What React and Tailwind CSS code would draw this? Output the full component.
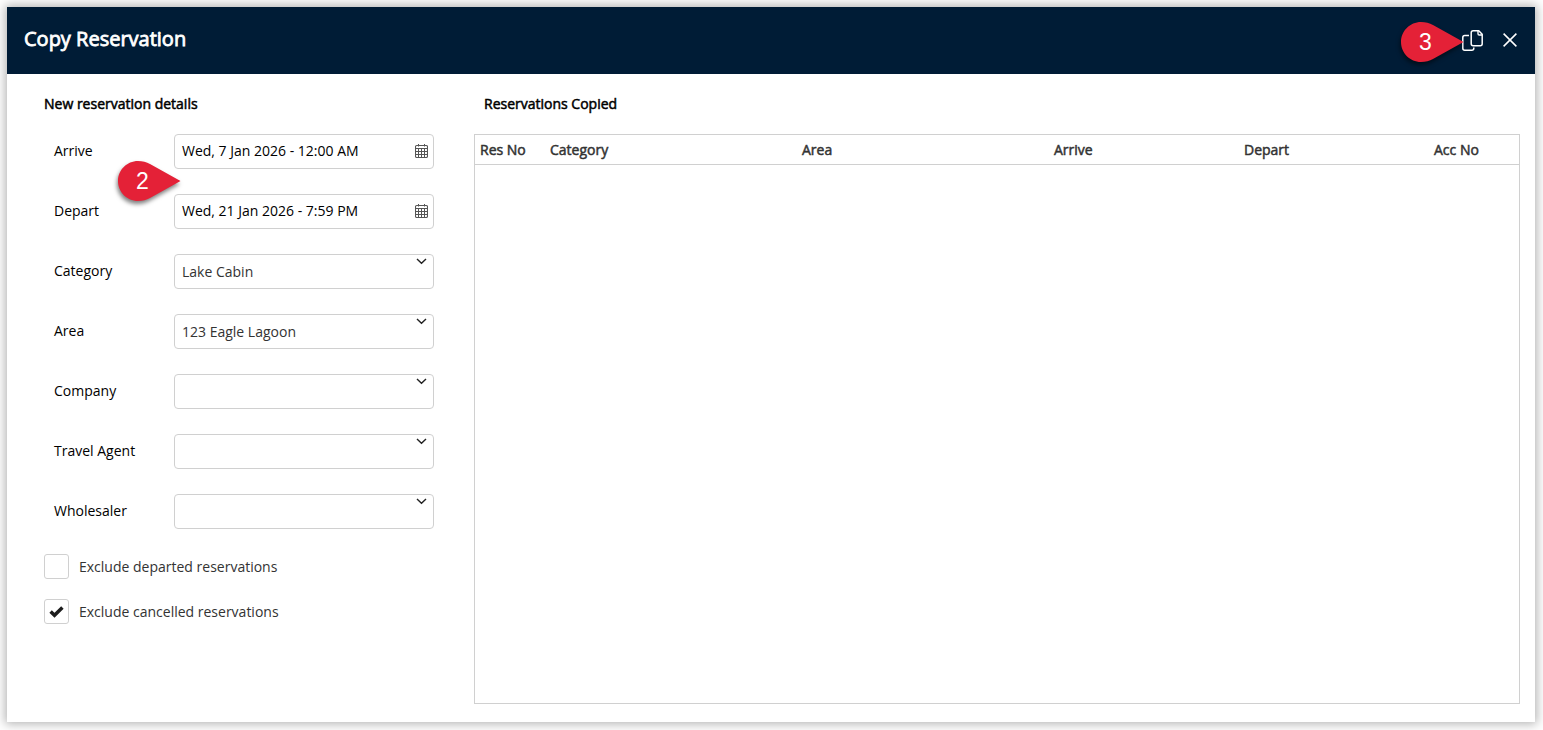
import clsx from 'clsx';

const dateFields = [
  { label: 'Arrive', value: 'Wed, 7 Jan 2026 - 12:00 AM' },
  { label: 'Depart', value: 'Wed, 21 Jan 2026 - 7:59 PM' },
];

const selectFields = [
  { label: 'Category', value: 'Lake Cabin' },
  { label: 'Area', value: '123 Eagle Lagoon' },
  { label: 'Company', value: '' },
  { label: 'Travel Agent', value: '' },
  { label: 'Wholesaler', value: '' },
];

const columns = [
  { name: 'Res No', width: 'w-[70px]' },
  { name: 'Category', width: 'w-[252px]' },
  { name: 'Area', width: 'w-[252px]' },
  { name: 'Arrive', width: 'w-[190px]' },
  { name: 'Depart', width: 'w-[190px]' },
  { name: 'Acc No', width: 'w-[80px]' },
];

function CalendarIcon() {
  return (
    <svg className="h-[14px] w-[13px] shrink-0" viewBox="0 0 13 14" fill="none" stroke="#555">
      <rect x="0.5" y="1.5" width="12" height="12" rx="1.2" strokeWidth="1.1" />
      <path d="M0.5 4.5h12M0.5 7.5h12M0.5 10.5h12M3.5 4.5V13.5M6.5 4.5V13.5M9.5 4.5V13.5" />
      <path d="M3.5 0V2.500M9.500 0V2.500" />
    </svg>
  );
}

function ChevronIcon() {
  return (
    <svg className="mt-[3px] h-[7px] w-[11px] shrink-0" viewBox="0 0 11 7" fill="none" stroke="#222" strokeWidth="1.4">
      <path d="M1 1L5.500 5.200L10 1" />
    </svg>
  );
}

function CopyIcon() {
  return (
    <svg className="h-[21px] w-[21px]" viewBox="0 0 21 21" fill="none" stroke="#fff" strokeWidth="1.5" strokeLinejoin="round">
      <path d="M11.2 0.800h5.600l3.400 3.400v9.500a2 2 0 0 1-2 2h-7a2 2 0 0 1-2-2V2.800a2 2 0 0 1 2-2z" />
      <path d="M16 1v2.800a1.200 1.200 0 0 0 1.200 1.200H20" strokeWidth="1.400" />
      <path d="M7 5.500H2.800a2 2 0 0 0-2 2v10.700a2 2 0 0 0 2 2h7a2 2 0 0 0 2-2V17.500" />
    </svg>
  );
}

function CloseIcon() {
  return (
    <svg className="h-[14px] w-[14px]" viewBox="0 0 14 14" fill="none" stroke="#fff" strokeWidth="1.5">
      <path d="M0.600 0.600l12.800 12.800M13.400 0.600L0.600 13.400" />
    </svg>
  );
}

function Pin({ number, className }) {
  return (
    <div className={clsx('absolute h-[40px] w-[63px]', className)}>
      <svg
        className="absolute inset-0 overflow-visible drop-shadow-[-1px_3px_2px_rgba(0,0,0,0.5)]"
        width="63"
        height="40"
        viewBox="0 0 63 40"
      >
        <path d="M20 0C9 0 0 9 0 20s9 20 20 20c4.500 0 8.500-1 12-3L62.500 20L32 3C28.500 1 24.500 0 20 0z" fill="#e42137" />
      </svg>
      <span className="absolute top-0 left-0 w-[49px] text-center font-['Liberation_Sans',sans-serif] text-[23px] leading-[41px] text-white">
        {number}
      </span>
    </div>
  );
}

function Checkbox({ label, checked }) {
  return (
    <div className="flex h-[25px] items-center gap-[10px] text-[#333]">
      <span className="flex h-[25px] w-[25px] items-center justify-center rounded-[3px] border border-[#d0d0d0]">
        {checked && (
          <svg className="h-[12px] w-[15px]" viewBox="0 0 15 12" fill="none" stroke="#1d1d1d" strokeWidth="3.500">
            <path d="M1.600 5.400L5.500 9.200L13.400 1.500" />
          </svg>
        )}
      </span>
      <span>{label}</span>
    </div>
  );
}

export default function App() {
  return (
    <div className="h-[730px] w-[1543px] overflow-hidden bg-white p-[7px] pr-2 pb-2 font-['Open_Sans',sans-serif] text-sm leading-5 text-black">
      <div className="relative flex h-full flex-col bg-white shadow-[0_0_10px_2px_rgba(0,0,0,0.3)]">
        <header className="flex h-[67px] shrink-0 items-center justify-between bg-[#001c36] pr-[18px] pl-[17px] text-white">
          <h1 className="pb-[3px] text-xl [-webkit-text-stroke:0.8px]">Copy Reservation</h1>
          <div className="flex items-center gap-5 pb-px">
            <CopyIcon />
            <CloseIcon />
          </div>
        </header>

        <main className="flex flex-1 pt-5 pr-[15px] pb-[18px] pl-[37px]">
          <section className="w-[430px] shrink-0">
            <h2 className="h-10 [-webkit-text-stroke:0.5px]">New reservation details</h2>

            <div className="flex w-[390px] flex-col gap-[25px]">
              {dateFields.map((field) => (
                <div key={field.label} className="flex h-[35px] items-center">
                  <label className="w-[130px] pb-0.5 pl-[10px]">{field.label}</label>
                  <div className="flex h-[35px] w-[260px] items-center justify-between rounded-[4px] border border-[#d0d0d0] pr-[5px] pb-px pl-[7px]">
                    <span className="pb-px">{field.value}</span>
                    <CalendarIcon />
                  </div>
                </div>
              ))}

              {selectFields.map((field) => (
                <div key={field.label} className="flex h-[35px] items-center">
                  <label className="w-[130px] pb-0.5 pl-[10px]">{field.label}</label>
                  <div className="flex h-[35px] w-[260px] justify-between rounded-[4px] border border-[#d0d0d0] pr-[6px] pl-[7px]">
                    <span className="pt-[7px] text-[#333]">{field.value}</span>
                    <ChevronIcon />
                  </div>
                </div>
              ))}
            </div>

            <div className="mt-[25px] flex flex-col gap-5">
              <Checkbox label="Exclude departed reservations" />
              <Checkbox label="Exclude cancelled reservations" checked />
            </div>
          </section>

          <section className="flex flex-1 flex-col">
            <h2 className="h-10 shrink-0 pl-[10px] [-webkit-text-stroke:0.5px]">Reservations Copied</h2>
            <div className="flex-1 border border-[#d0d0d0]">
              <div className="flex h-[30px] items-center border-b border-[#d0d0d0] pl-[5px] text-[#333] [-webkit-text-stroke:0.5px]">
                {columns.map((col) => (
                  <div key={col.name} className={col.width}>
                    {col.name}
                  </div>
                ))}
              </div>
            </div>
          </section>
        </main>

        <Pin number={2} className="top-[154px] left-[111px]" />
        <Pin number={3} className="top-[15px] left-[1394px]" />
      </div>
    </div>
  );
}
